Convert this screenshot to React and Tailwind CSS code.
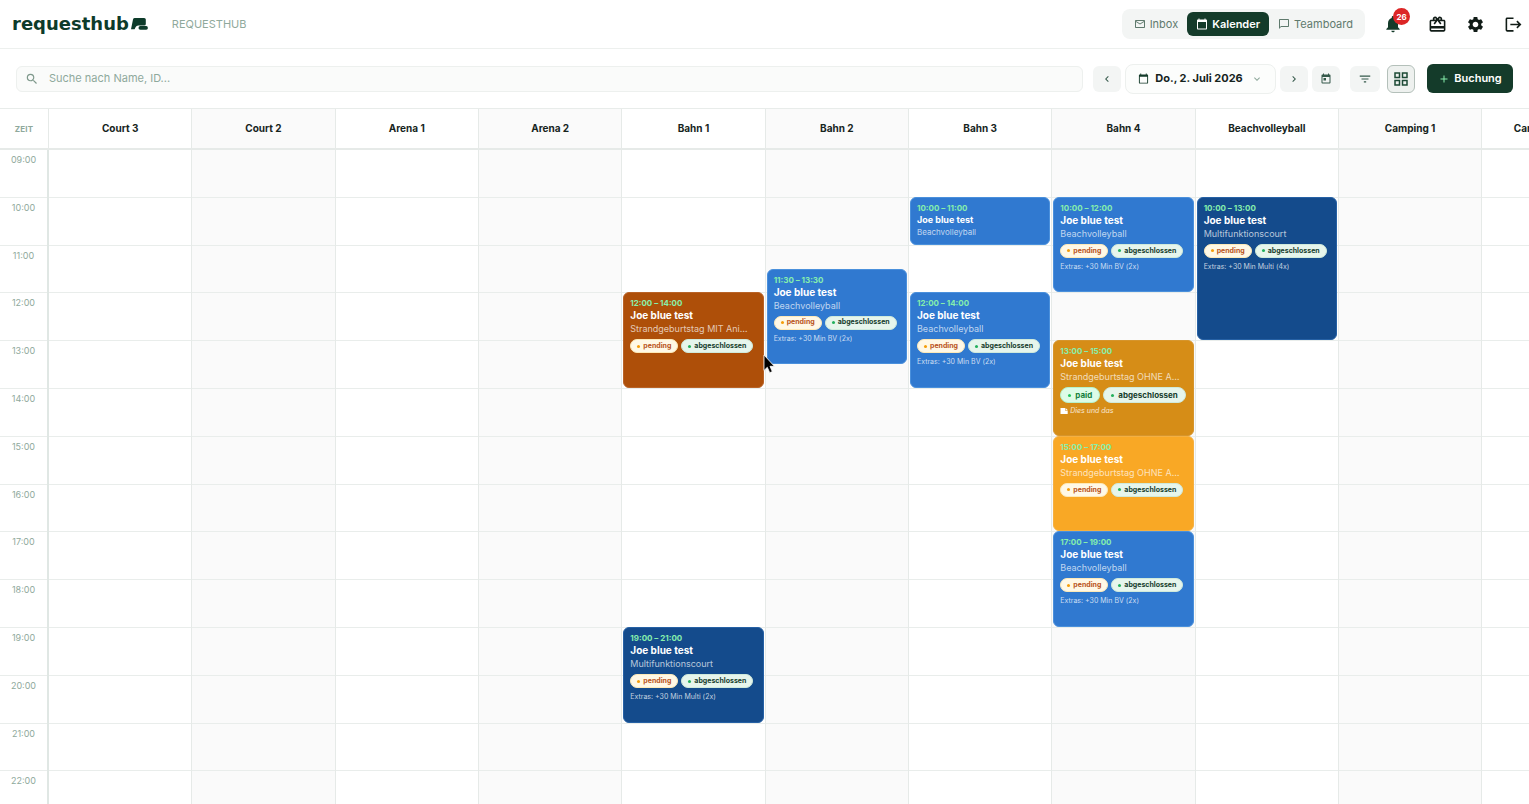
import {
  MdAdd,
  MdCalendarToday,
  MdCardGiftcard,
  MdChatBubbleOutline,
  MdChevronLeft,
  MdChevronRight,
  MdExpandMore,
  MdFilterList,
  MdLogout,
  MdMailOutline,
  MdNotifications,
  MdOutlineGridView,
  MdSearch,
  MdSettings,
  MdToday,
} from "react-icons/md";

const FIRST_HOUR = 9;
const hours = Array.from({ length: 14 }, (_, i) => FIRST_HOUR + i);

const navItems = [
  { label: "Inbox", icon: MdMailOutline },
  { label: "Kalender", icon: MdCalendarToday, active: true },
  { label: "Teamboard", icon: MdChatBubbleOutline },
];

const colors = {
  blue: "bg-[#3079d0] border-[#4a90dc]",
  navy: "bg-[#144b8c] border-[#2661a5]",
  rust: "bg-[#ae4f09] border-[#b96327]",
  ochre: "bg-[#d68d17] border-[#d6952c]",
  amber: "bg-[#f9a825] border-[#f5b041]",
};

const statusColors = {
  pending: { pill: "bg-[#fff8e6] border-[#fde9b8] text-[#b9531a]", dot: "bg-[#f59e0b]" },
  paid: { pill: "bg-[#dcfce7] border-[#b5f2ca] text-[#16803c]", dot: "bg-[#22c55e]" },
  abgeschlossen: { pill: "bg-[#e6f5ec] border-[#cfeadb] text-[#173d2c]", dot: "bg-[#22b05c]" },
};

// start / end are decimal hours, 11.5 = 11:30
const resources = [
  { name: "Court 3", events: [] },
  { name: "Court 2", events: [] },
  { name: "Arena 1", events: [] },
  { name: "Arena 2", events: [] },
  {
    name: "Bahn 1",
    events: [
      { start: 12, end: 14, title: "Strandgeburtstag MIT Animation", color: "rust", status: "pending" },
      { start: 19, end: 21, title: "Multifunktionscourt", color: "navy", status: "pending", extras: "+30 Min Multi (2x)" },
    ],
  },
  {
    name: "Bahn 2",
    events: [
      { start: 11.5, end: 13.5, title: "Beachvolleyball", color: "blue", status: "pending", extras: "+30 Min BV (2x)" },
    ],
  },
  {
    name: "Bahn 3",
    events: [
      { start: 10, end: 11, title: "Beachvolleyball", color: "blue" },
      { start: 12, end: 14, title: "Beachvolleyball", color: "blue", status: "pending", extras: "+30 Min BV (2x)" },
    ],
  },
  {
    name: "Bahn 4",
    events: [
      { start: 10, end: 12, title: "Beachvolleyball", color: "blue", status: "pending", extras: "+30 Min BV (2x)" },
      { start: 13, end: 15, title: "Strandgeburtstag OHNE Animation", color: "ochre", status: "paid", note: "Dies und das" },
      { start: 15, end: 17, title: "Strandgeburtstag OHNE Animation", color: "amber", status: "pending" },
      { start: 17, end: 19, title: "Beachvolleyball", color: "blue", status: "pending", extras: "+30 Min BV (2x)" },
    ],
  },
  {
    name: "Beachvolleyball",
    events: [
      { start: 10, end: 13, title: "Multifunktionscourt", color: "navy", status: "pending", extras: "+30 Min Multi (4x)" },
    ],
  },
  { name: "Camping 1", events: [] },
  { name: "Camping Platz 2", events: [] },
];

function formatTime(t) {
  const h = String(Math.floor(t)).padStart(2, "0");
  return `${h}:${t % 1 ? "30" : "00"}`;
}

// Two grid rows per hour, so half-hour bookings land on a row line.
function rowsFor(start, end) {
  return { gridRow: `${(start - FIRST_HOUR) * 2 + 1} / ${(end - FIRST_HOUR) * 2 + 1}` };
}

function StatusPill({ status, large }) {
  const c = statusColors[status];
  return (
    <span
      className={`flex items-center rounded-full border font-bold ${c.pill} ${
        large ? "h-4 gap-1 px-[7px] text-[8px]" : "h-[14px] gap-[3px] px-1.5 text-[7px]"
      }`}
    >
      <span className={`size-[3px] rounded-full ${c.dot}`} />
      {status}
    </span>
  );
}

function NoteIcon() {
  return (
    <svg viewBox="0 0 8 8" className="size-2 fill-white">
      <path d="M.5 1h4.500v2.500h2.700V7H.5Z" />
      <path d="M5.500 1 7.700 3H5.500Z" />
    </svg>
  );
}

function EventCard({ event }) {
  const compact = event.end - event.start <= 1;
  return (
    <article
      style={rowsFor(event.start, event.end)}
      className={`z-10 col-start-1 mx-px -mt-px mb-px flex min-w-0 flex-col overflow-hidden rounded-md border px-1.5 pt-[5px] text-white ${colors[event.color]}`}
    >
      <p className="text-[8px] leading-[10px] font-bold text-[#86efac]">
        {formatTime(event.start)} – {formatTime(event.end)}
      </p>
      <h3 className={`font-bold ${compact ? "text-[9px] leading-[13px]" : "text-[10px] leading-[14px]"}`}>
        Joe blue test
      </h3>
      <p className={`mr-1 truncate leading-[13px] text-white/70 ${compact ? "text-[8px]" : "text-[9px]"}`}>
        {event.title}
      </p>
      {event.status && (
        <div className="mt-1 flex shrink-0 gap-[3px]">
          <StatusPill status={event.status} large={!!event.note} />
          <StatusPill status="abgeschlossen" large={!!event.note} />
        </div>
      )}
      {event.extras && (
        <p className="mt-1 text-[7px] leading-[10px] text-white/75">Extras: {event.extras}</p>
      )}
      {event.note && (
        <p className="mt-[3px] flex items-center gap-0.5 text-[7px] leading-[10px] text-white/80 italic">
          <NoteIcon />
          {event.note}
        </p>
      )}
    </article>
  );
}

function Logo() {
  return (
    <a href="#" aria-label="requesthub" className="flex items-center gap-0.5 text-[#0d3b2a]">
      <span className="font-['DejaVu_Sans'] text-[18px] leading-5 font-bold">requesthub</span>
      <svg viewBox="0 0 17 12" className="h-3 w-[17px] fill-current">
        <path d="M3.800 0h9.400q1.600 0 1.600 1.600v4.300q0 1.500-1.500 1.500H7.200Q5.400 7.400 4.700 9L3.600 11.300H0L2 1.400Q2.300 0 3.800 0Z" />
        <path d="M9.300 8.100h5.900q1.700 0 1.700 1.800t-1.700 1.800H9.300Q7.500 11.700 7.500 9.900T9.300 8.100Z" />
      </svg>
    </a>
  );
}

function Header() {
  return (
    <header className="flex h-[49px] shrink-0 items-center border-b border-[#edf0ee] pr-1 pl-3">
      <Logo />
      <span className="ml-6 text-[11px] text-[#8fa99c]">REQUESTHUB</span>

      <nav className="ml-auto flex items-center rounded-lg bg-[#f3f5f4] p-[3px]">
        {navItems.map(({ label, icon: Icon, active }) => (
          <a
            key={label}
            href="#"
            aria-current={active ? "page" : undefined}
            className={`flex h-6 items-center gap-1 rounded-md px-[9px] text-[11px] ${
              active ? "bg-[#143b2a] font-semibold text-white" : "text-[#5f7a6d]"
            }`}
          >
            <Icon className="size-3" />
            {label}
          </a>
        ))}
      </nav>

      <div className="ml-4 flex items-center gap-3.5 text-[#111c17]">
        <button aria-label="Benachrichtigungen" className="relative flex size-6 items-center justify-center">
          <MdNotifications className="size-5 text-[#143b2a]" />
          <span className="absolute -top-1 left-3 flex size-[17px] items-center justify-center rounded-full bg-[#dc2626] text-[8px] font-bold text-white">
            26
          </span>
        </button>
        <button aria-label="Gutscheine" className="ml-1.5 flex size-6 items-center justify-center">
          <MdCardGiftcard className="size-[19px]" />
        </button>
        <button aria-label="Einstellungen" className="flex size-6 items-center justify-center">
          <MdSettings className="size-[19px]" />
        </button>
        <button aria-label="Abmelden" className="flex size-6 items-center justify-center">
          <MdLogout className="size-[19px]" />
        </button>
      </div>
    </header>
  );
}

function Toolbar() {
  const square = "flex h-[26px] w-7 items-center justify-center rounded-md bg-[#f3f5f4] text-[#35594a]";
  return (
    <div className="flex h-[59px] shrink-0 items-center px-4">
      <label className="flex h-[26px] min-w-0 flex-1 items-center gap-2.5 rounded-md border border-[#edf0ee] bg-[#fafbfa] pl-2">
        <MdSearch className="size-3.5 shrink-0 text-[#7f998c]" />
        <input
          type="text"
          aria-label="Suche"
          placeholder="Suche nach Name, ID..."
          className="min-w-0 flex-1 bg-transparent text-[11px] outline-none placeholder:text-[#8fa99c]"
        />
      </label>

      <div className="ml-2.5 flex items-center gap-1">
        <button aria-label="Vorheriger Tag" className={square}>
          <MdChevronLeft className="size-3" />
        </button>
        <button className="flex h-[30px] w-[151px] items-center justify-center gap-1.5 rounded-lg border border-[#edf0ee] bg-[#fcfdfc] text-[11px] font-bold text-[#16241d]">
          <MdCalendarToday className="size-[11px] text-[#143b2a]" />
          Do., 2. Juli 2026
          <MdExpandMore className="ml-0.5 size-3 text-[#8fa99c]" />
        </button>
        <button aria-label="Nächster Tag" className={square}>
          <MdChevronRight className="size-3" />
        </button>
        <button aria-label="Heute" className={square}>
          <MdToday className="size-3" />
        </button>
      </div>

      <div className="ml-2.5 flex items-center gap-[7px]">
        <button aria-label="Filter" className="flex h-[26px] w-[30px] items-center justify-center rounded-md bg-[#f3f5f4] text-[#35594a]">
          <MdFilterList className="size-3.5" />
        </button>
        <button aria-label="Rasteransicht" className="flex size-7 items-center justify-center rounded-md border border-[#b4c0ba] bg-[#eef1ef] text-[#1d4a36]">
          <MdOutlineGridView className="size-[18px]" />
        </button>
      </div>

      <button className="ml-3 flex h-[29px] w-[86px] items-center justify-center gap-1 rounded-md bg-[#143b2a] text-[11px] font-semibold text-white">
        <MdAdd className="size-3 text-[#86efac]" />
        Buchung
      </button>
    </div>
  );
}

function Calendar() {
  return (
    <main className="flex min-h-0 flex-1 flex-col overflow-hidden border-t border-[#e8ecea]">
      <div className="flex h-[41px] shrink-0 border-b-2 border-[#e6eae8]">
        <div className="flex w-[49px] shrink-0 items-center justify-center border-r border-[#e6eae8] text-[8px] font-bold tracking-wide text-[#8fa99c]">
          ZEIT
        </div>
        <div className="grid min-w-0 flex-1 auto-cols-[9.685%] grid-flow-col overflow-hidden">
          {resources.map((r) => (
            <h2
              key={r.name}
              className="flex items-center justify-center border-r border-[#e6eae8] text-[10px] font-bold text-[#16241d] even:bg-[#fafafa]"
            >
              {r.name}
            </h2>
          ))}
        </div>
      </div>

      <div className="min-h-0 flex-1 overflow-hidden">
        {/* 14 hours, the last one running a little past the fold */}
        <div className="flex h-[102.33%]">
          <div className="grid w-[49px] shrink-0 grid-rows-[repeat(14,minmax(0,1fr))] border-r-2 border-[#e0e7e4]">
            {hours.map((h) => (
              <div key={h} className="border-b border-[#e9edeb] pt-1 text-center text-[9px] leading-3 text-[#8fa99c]">
                {formatTime(h)}
              </div>
            ))}
          </div>

          <div className="grid min-w-0 flex-1 auto-cols-[9.685%] grid-flow-col overflow-hidden">
            {resources.map((r) => (
              <section
                key={r.name}
                aria-label={r.name}
                className="grid grid-cols-[minmax(0,1fr)] grid-rows-[repeat(28,minmax(0,1fr))] border-r border-[#e6eae8] even:bg-[#fafafa]"
              >
                {hours.map((h) => (
                  <div key={h} style={rowsFor(h, h + 1)} className="col-start-1 border-b border-[#e9edeb]" />
                ))}
                {r.events.map((e) => (
                  <EventCard key={e.start} event={e} />
                ))}
              </section>
            ))}
          </div>
        </div>
      </div>
    </main>
  );
}

export default function App() {
  return (
    <div className="relative flex h-screen flex-col overflow-hidden bg-white font-['Inter',sans-serif]">
      <Header />
      <Toolbar />
      <Calendar />

      {/* Mouse pointer */}
      <svg viewBox="0 0 12 20" className="pointer-events-none absolute top-[354px] left-[763px] z-20 h-5 w-3">
        <path
          d="M1 1v15.500l3.300-3.200 2.400 5.400 2.600-1.100-2.300-5.300h4.400Z"
          className="fill-black stroke-white"
          strokeWidth="0.8"
        />
      </svg>
    </div>
  );
}
